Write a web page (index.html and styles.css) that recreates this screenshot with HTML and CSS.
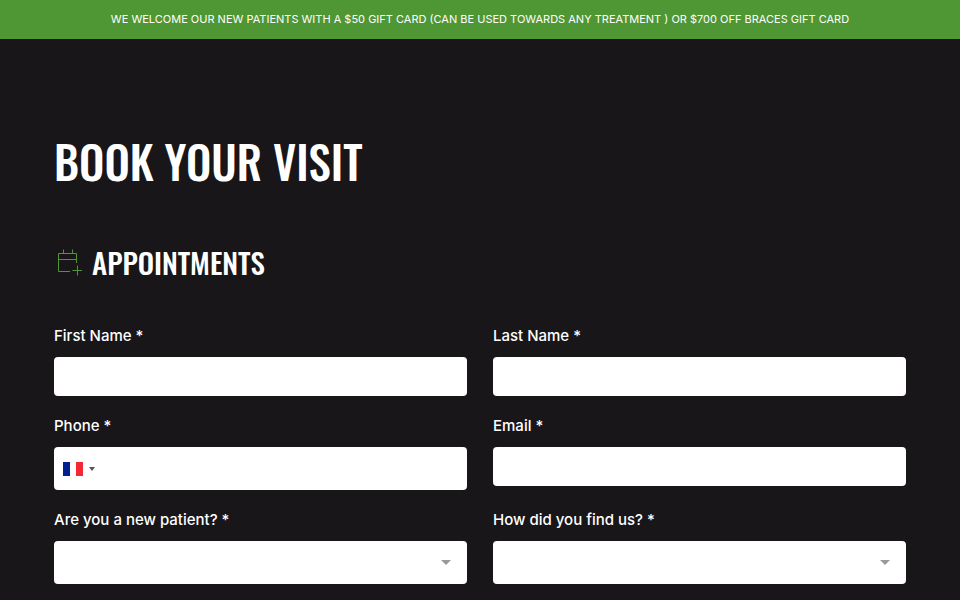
FILE: index.html
```html
<!DOCTYPE html>
<html lang="en">
<head>
<meta charset="utf-8">
<meta name="viewport" content="width=device-width, initial-scale=1">
<title>Book Your Visit</title>
<link rel="stylesheet" href="styles.css">
</head>
<body>
<div class="promo">WE WELCOME OUR NEW PATIENTS WITH A $50 GIFT CARD (CAN BE USED TOWARDS ANY TREATMENT ) OR $700 OFF BRACES GIFT CARD</div>
<main class="page">
  <h1 class="title">BOOK YOUR VISIT</h1>
  <div class="section-head">
    <svg class="section-icon" viewBox="0 0 28 28" aria-hidden="true">
      <path d="M16 23.500H4.500V5.500H22.500V15M4.500 11.500H22.500M9.500 1.500V5.500M18.500 1.500V5.500M23.500 17.500V27.500M18.500 22.500H28"/>
    </svg>
    <h2 class="subtitle">APPOINTMENTS</h2>
  </div>
  <form class="form">
    <div class="field">
      <label for="first-name">First Name *</label>
      <input class="control" id="first-name" type="text">
    </div>
    <div class="field">
      <label for="last-name">Last Name *</label>
      <input class="control" id="last-name" type="text">
    </div>
    <div class="field">
      <label for="phone">Phone *</label>
      <div class="control control-tall phone">
        <button class="country" type="button" aria-label="Country: France">
          <svg class="flag" viewBox="0 0 20 14" aria-hidden="true">
            <path fill="#fff" d="M0 0h20v14H0z"/>
            <path fill="#001f91" d="M0 0h7v14H0z"/>
            <path fill="#f32938" d="M13 0h7v14h-7z"/>
          </svg>
          <span class="caret"></span>
        </button>
        <input class="phone-input" id="phone" type="tel">
      </div>
    </div>
    <div class="field">
      <label for="email">Email *</label>
      <input class="control" id="email" type="email">
    </div>
    <div class="field">
      <label for="new-patient">Are you a new patient? *</label>
      <select class="control control-tall select" id="new-patient"><option></option></select>
    </div>
    <div class="field">
      <label for="source">How did you find us? *</label>
      <select class="control control-tall select" id="source"><option></option></select>
    </div>
  </form>
</main>
</body>
</html>
```
FILE: styles.css
```css
* {
  box-sizing: border-box;
}

body {
  margin: 0;
  background: #181619;
  color: #fff;
  font-family: Inter, "Liberation Sans", sans-serif;
}

.promo {
  padding: 10px 16px 11px;
  background: #4f9634;
  font-size: 11px;
  line-height: 18px;
  text-align: center;
}

.page {
  padding: 90px 54px 0;
}

.title,
.subtitle {
  margin: 0;
  font-family: Oswald, "Roboto Condensed", sans-serif;
  font-weight: 500;
}

.title {
  font-size: 45px;
  line-height: 64px;
}

.section-head {
  display: flex;
  align-items: center;
  gap: 10px;
  margin-top: 49px;
}

.section-icon {
  width: 28px;
  height: 28px;
  fill: none;
  stroke: #4f9634;
}

.subtitle {
  font-size: 29px;
  line-height: 40px;
}

.form {
  display: grid;
  grid-template-columns: 1fr 1fr;
  gap: 19px 26px;
  padding: 43px 0 16px;
}

.field {
  display: flex;
  flex-direction: column;
  align-items: stretch;
  gap: 10px;
  min-width: 0;
}

.field label {
  font-size: 15px;
  font-weight: 500;
  line-height: 22px;
}

.control {
  width: 100%;
  height: 39px;
  padding: 0 12px;
  border: 0;
  border-radius: 4px;
  background: #fff;
  color: #18161a;
  font: inherit;
}

.control-tall {
  height: 43px;
}

.phone {
  display: flex;
  padding: 0;
}

.country {
  display: flex;
  align-items: center;
  gap: 6px;
  padding: 0 6px 0 9px;
  border: 0;
  background: none;
}

.flag {
  width: 20px;
  height: 14px;
}

.caret {
  border: 3px solid transparent;
  border-top: 4px solid #555;
  border-bottom: 0;
}

.phone-input {
  flex: 1;
  min-width: 0;
  border: 0;
  background: none;
  font: inherit;
}

.select {
  appearance: none;
  background: #fff url("data:image/svg+xml,%3Csvg xmlns='http://www.w3.org/2000/svg' width='10' height='5'%3E%3Cpath fill='%23999' d='M0 0h10L5 5z'/%3E%3C/svg%3E") no-repeat right 16px center;
}
```
